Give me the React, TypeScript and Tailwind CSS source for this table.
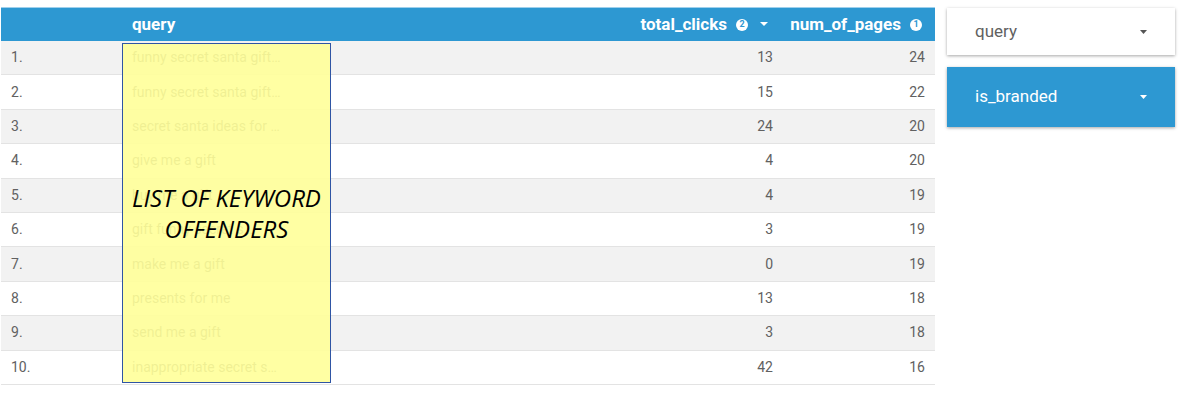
import React from "react";

const rows: [string, number, number][] = [
  ["funny secret santa gift…", 13, 24],
  ["funny secret santa gift…", 15, 22],
  ["secret santa ideas for …", 24, 20],
  ["give me a gift", 4, 20],
  ["buy me a gift", 4, 19],
  ["gift funny secret s…", 3, 19],
  ["make me a gift", 0, 19],
  ["presents for me", 13, 18],
  ["send me a gift", 3, 18],
  ["inappropriate secret s…", 42, 16],
];

function Circled({ n }: { n: number }) {
  return (
    <span className="ml-[9px] inline-flex h-[12px] w-[12px] items-center justify-center rounded-full bg-white text-[9px] font-bold leading-none text-[#2d98d2]">
      {n}
    </span>
  );
}

function Tri({ color, w = 8, h = 4 }: { color: string; w?: number; h?: number }) {
  return (
    <svg width={w} height={h} viewBox={`0 0 ${w} ${h}`}>
      <polygon points={`0,0 ${w},0 ${w / 2},${h}`} fill={color} />
    </svg>
  );
}

export default function App() {
  return (
    <div
      className="flex h-[394px] w-[1183px] bg-white text-[14px] text-[#616161]"
      style={{ fontFamily: "Roboto, 'Liberation Sans', sans-serif" }}
    >
      <div className="relative ml-px mt-[7px] w-[934px]">
        <div className="flex h-[34px] items-center border-t border-[#9fd0ec] bg-[#2d98d2] text-[17px] font-bold text-white">
          <div className="w-[121px]" />
          <div className="flex-1 pl-[10px]">query</div>
          <div className="flex w-[220px] items-center justify-end pr-[15px]">
            total_clicks
            <Circled n={2} />
            <span className="mb-[2px] ml-[12px]">
              <Tri color="#ffffff" w={8} h={4} />
            </span>
          </div>
          <div className="flex w-[152px] items-center justify-end pr-[13px]">
            num_of_pages
            <Circled n={1} />
          </div>
        </div>
        {rows.map(([q, c, p], i) => (
          <div
            key={i}
            className={`flex h-[34.4px] items-center border-b border-[#e3e3e3] ${
              i % 2 === 0 ? "bg-[#f2f2f2]" : "bg-white"
            }`}
          >
            <div className="w-[121px] pl-[10px]">{i + 1}.</div>
            <div className="flex-1 pl-[10px]">{q}</div>
            <div className="w-[220px] pr-[10px] text-right">{c}</div>
            <div className="w-[152px] pr-[10px] text-right">{p}</div>
          </div>
        ))}
        <div className="absolute left-[121px] top-[36px] flex h-[340px] w-[209px] items-center justify-center border border-[#2f55a4] bg-[#ffff99]/90">
          <div
            className="text-center text-[24px] italic leading-[31px] text-black"
            style={{ fontFamily: "'Open Sans', sans-serif" }}
          >
            LIST OF KEYWORD
            <br />
            OFFENDERS
          </div>
        </div>
      </div>
      <div className="ml-[12px] mt-[8px] flex w-[228px] flex-col gap-[12px]">
        <div className="flex h-[47px] items-center justify-between bg-white pl-[28px] pr-[28px] text-[17px] text-[#616161] shadow-[0_1px_3px_rgba(0,0,0,0.35)]">
          <span>query</span>
          <Tri color="#555555" w={7} h={4} />
        </div>
        <div className="flex h-[60px] items-center justify-between bg-[#2d98d2] pl-[28px] pr-[28px] text-[17px] text-white shadow-[0_1px_3px_rgba(0,0,0,0.35)]">
          <span>is_branded</span>
          <Tri color="#ffffff" w={7} h={4} />
        </div>
      </div>
    </div>
  );
}
